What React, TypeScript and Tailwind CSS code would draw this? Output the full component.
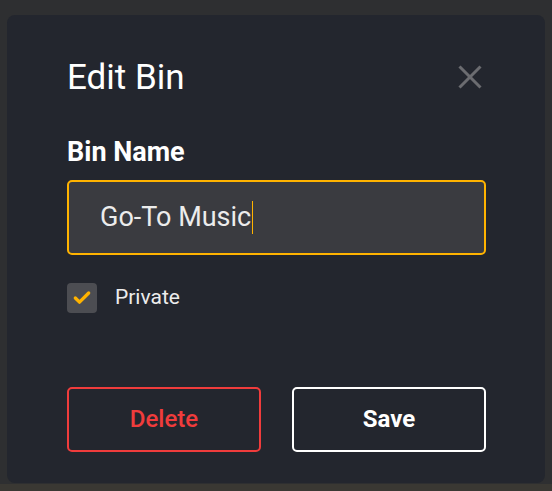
import { Check } from 'lucide-react'

export default function App() {
  return (
    <div className="flex h-[491px] w-[552px] flex-col bg-[#2e2f31] font-['Roboto',sans-serif]">
      <div className="mx-[7px] mt-[15px] h-[468px] rounded-lg bg-[#23262e] pl-[60px] pr-[59px] pt-[42px]">
        {/* Header */}
        <div className="flex h-[40px] items-center justify-between">
          <h1 className="text-[35px] leading-none text-white">Edit Bin</h1>
          <button className="mr-[4px] text-[#6b6c70]">
            <svg width="24" height="24" viewBox="0 0 24 24" stroke="currentColor" strokeWidth="3">
              <line x1="1.5" y1="1.5" x2="22.5" y2="22.5" />
              <line x1="22.5" y1="1.5" x2="1.5" y2="22.5" />
            </svg>
          </button>
        </div>

        {/* Name field */}
        <label className="mt-[42px] block text-[27px] font-bold leading-none text-white">Bin Name</label>
        <div className="mt-[14px] flex h-[75px] items-center rounded-[5px] border-2 border-[#ffb300] bg-[#3a3b40] pl-[31px]">
          <span className="text-[27px] text-[#ececec]">Go-To Music</span>
          <span className="ml-[1px] h-[33px] w-[1px] bg-[#ffb300]"></span>
        </div>

        {/* Private checkbox */}
        <div className="mt-[27px] flex items-center gap-[18px]">
          <div className="flex h-[30px] w-[30px] items-center justify-center rounded-[4px] bg-[#4c4d52]">
            <Check size={20} strokeWidth={4} className="text-[#ffb300]" />
          </div>
          <span className="text-[21px] text-[#ececec]">Private</span>
        </div>

        {/* Actions */}
        <div className="mt-[73px] flex gap-[31px]">
          <button className="h-[65px] flex-1 rounded-[5px] border-2 border-[#f03c3c] text-[24px] font-medium text-[#f03c3c]">
            Delete
          </button>
          <button className="h-[65px] flex-1 rounded-[5px] border-2 border-white text-[24px] font-bold text-white">
            Save
          </button>
        </div>
      </div>
      <div className="mt-auto h-[7px] bg-[#3a3833]"></div>
    </div>
  )
}
